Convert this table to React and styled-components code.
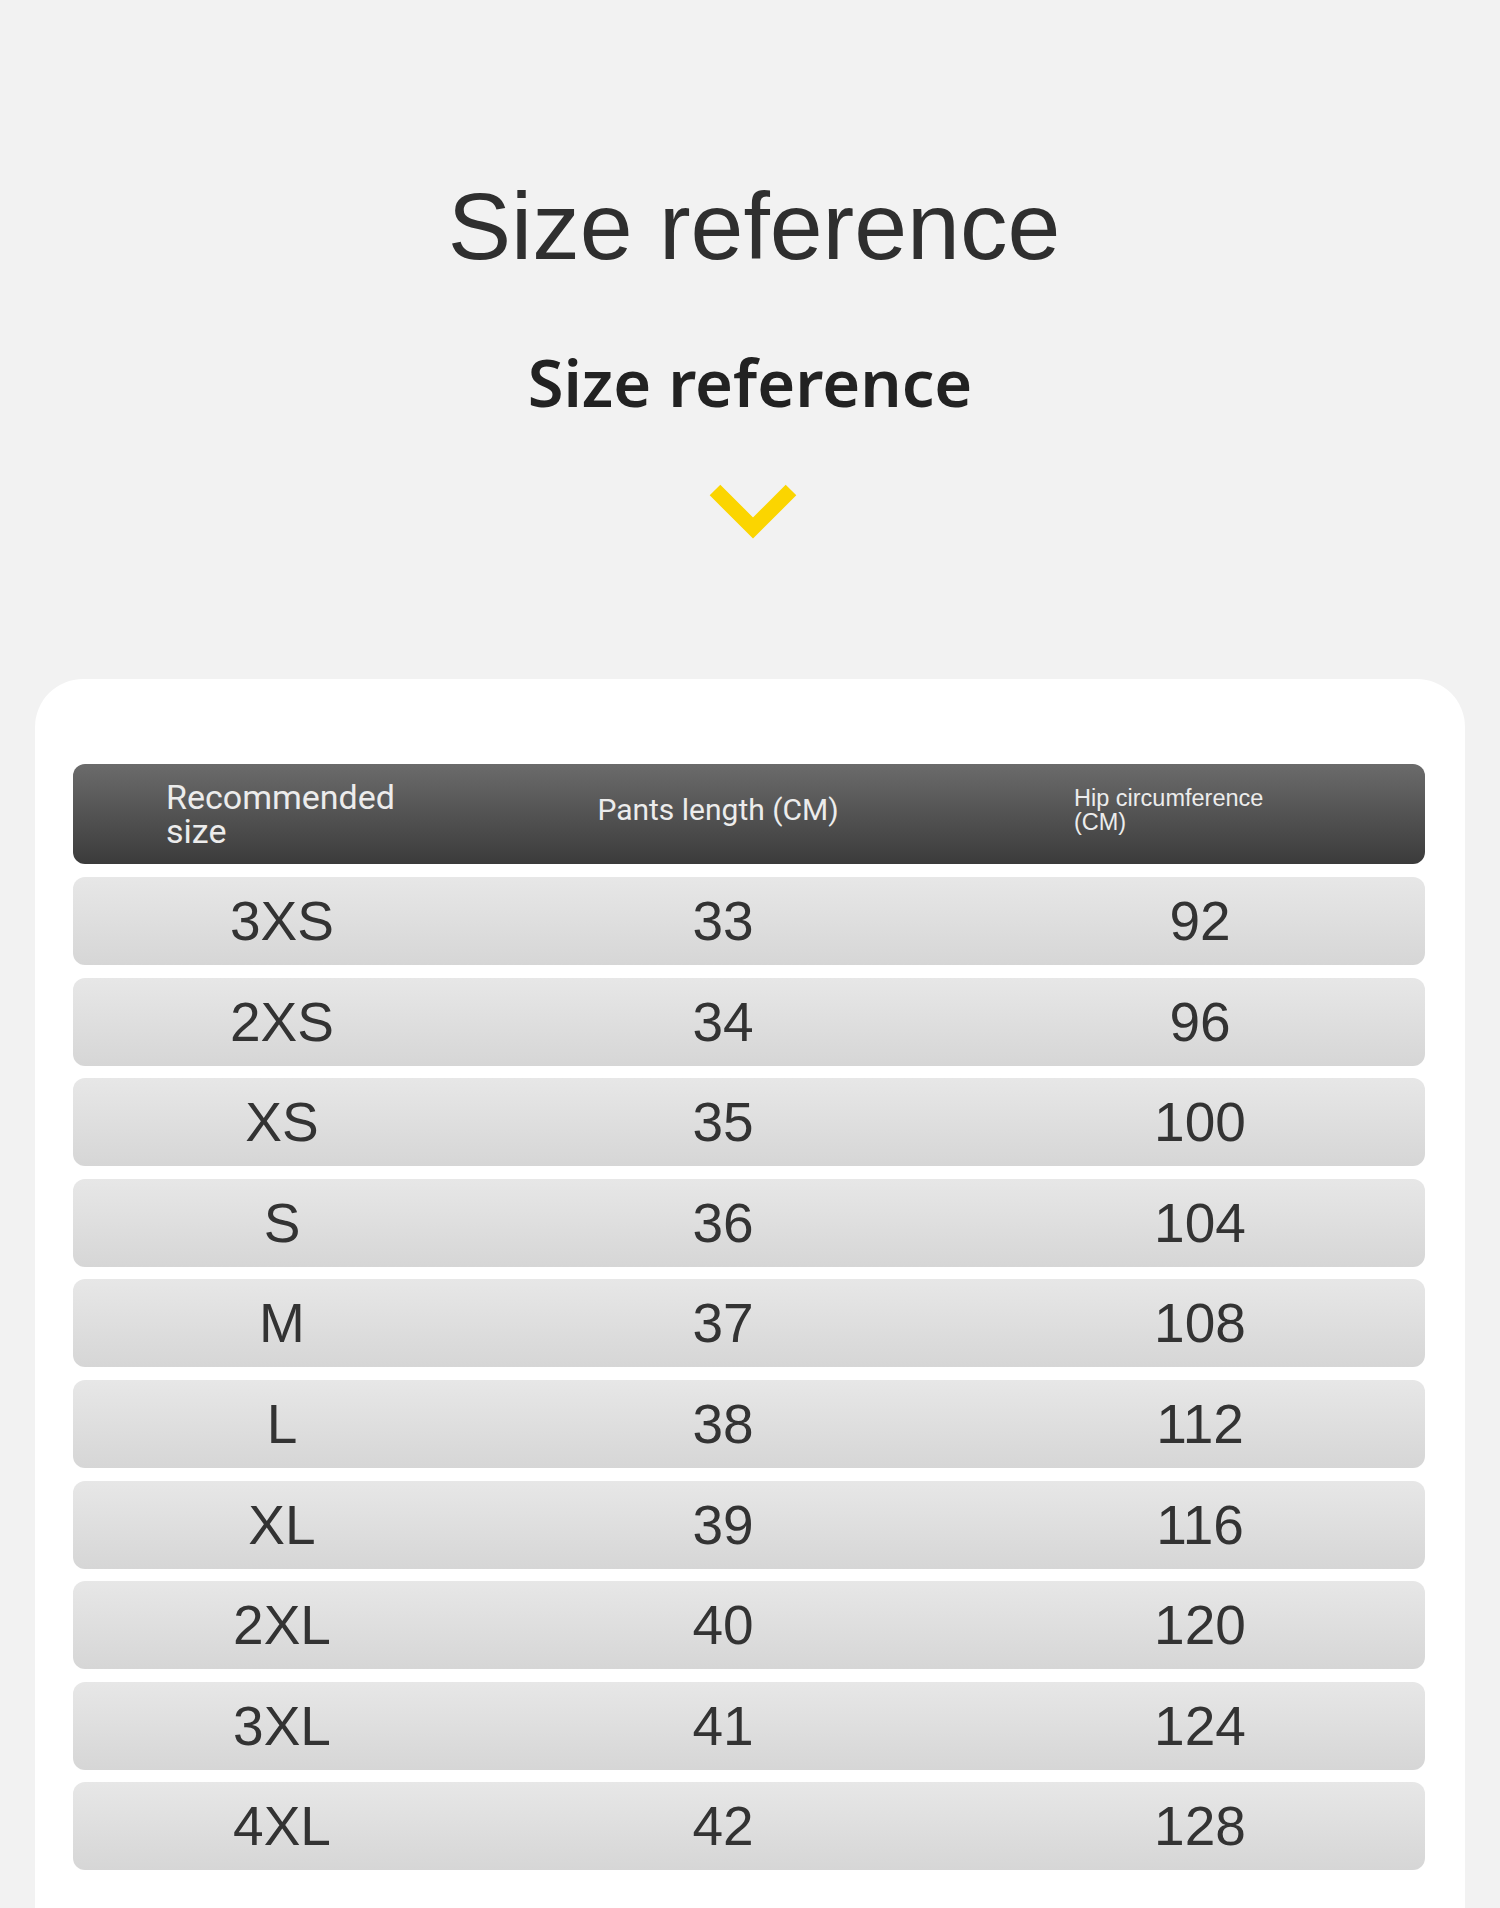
import React from "react";
import styled, { createGlobalStyle } from "styled-components";

const sizes = [
  ["3XS", 33, 92],
  ["2XS", 34, 96],
  ["XS", 35, 100],
  ["S", 36, 104],
  ["M", 37, 108],
  ["L", 38, 112],
  ["XL", 39, 116],
  ["2XL", 40, 120],
  ["3XL", 41, 124],
  ["4XL", 42, 128],
];

const GlobalStyle = createGlobalStyle`
  html, body {
    margin: 0;
    padding: 0;
    background: #f2f2f2;
    overflow: hidden;
  }
  body {
    font-family: "Liberation Sans", Arial, sans-serif;
  }
`;

export default function App() {
  return (
    <Page>
      <GlobalStyle />
      <Title>Size reference</Title>
      <Subtitle>Size reference</Subtitle>
      <Chevron viewBox="0 0 96 60" width="96" height="60">
        <polyline points="10,10 48,48 86,10" fill="none" stroke="#fbd500" strokeWidth="15" strokeLinejoin="miter" />
      </Chevron>
      <Card>
        <HeaderRow>
          <HeadCell $first>Recommended size</HeadCell>
          <HeadCell $center>Pants length (CM)</HeadCell>
          <HeadCell $small>Hip circumference (CM)</HeadCell>
        </HeaderRow>
        <Rows>
          {sizes.map(([size, len, hip]) => (
            <Row key={size}>
              <Cell>{size}</Cell>
              <Cell>{len}</Cell>
              <Cell $last>{hip}</Cell>
            </Row>
          ))}
        </Rows>
      </Card>
    </Page>
  );
}

const Page = styled.div`
  width: 1500px;
  height: 1908px;
  display: flex;
  flex-direction: column;
  align-items: center;
  padding-top: 179px;
  box-sizing: border-box;
`;

const Title = styled.h1`
  margin: 0 0 0 8px;
  font-family: "Liberation Sans", Arial, sans-serif;
  font-weight: 400;
  font-size: 95px;
  line-height: 1;
  color: #2f2f2f;
`;

const Subtitle = styled.h2`
  margin: 75px 0 0;
  font-family: "Noto Sans", sans-serif;
  font-weight: 600;
  font-size: 65px;
  line-height: 66px;
  color: #222;
`;

const Chevron = styled.svg`
  display: block;
  margin: 65px 0 0 6px;
`;

const Card = styled.div`
  margin-top: 139px;
  width: 1430px;
  flex: 1;
  box-sizing: border-box;
  background: #fff;
  border-radius: 48px 48px 0 0;
  padding: 85px 40px 0 38px;
`;

const Grid = styled.div`
  display: grid;
  grid-template-columns: 418px 464px 1fr;
  align-items: center;
`;

const HeaderRow = styled(Grid)`
  height: 100px;
  padding-bottom: 8px;
  box-sizing: border-box;
  border-radius: 12px;
  background: linear-gradient(to bottom, #6b6b6b, #3b3b3b);
  color: #ececec;
`;

const HeadCell = styled.div`
  font-family: ${(p) => (p.$small ? '"Liberation Sans", Arial' : '"Roboto", "Liberation Sans"')}, sans-serif;
  font-size: ${(p) => (p.$small ? "23.5px" : p.$center ? "30px" : "34px")};
  line-height: ${(p) => (p.$small ? "24px" : "34px")};
  text-align: ${(p) => (p.$center ? "center" : "left")};
  padding-left: ${(p) => (p.$first ? "93px" : p.$small ? "119px" : "0")};
  padding-right: ${(p) => (p.$center ? "10px" : "0")};
  margin-top: ${(p) => (p.$first ? "8px" : "0")};
  max-width: ${(p) => (p.$first ? "250px" : p.$small ? "210px" : "none")};
`;

const Rows = styled.div`
  display: flex;
  flex-direction: column;
  gap: 12.6px;
  margin-top: 13px;
`;

const Row = styled(Grid)`
  height: 88px;
  border-radius: 12px;
  background: linear-gradient(to bottom, #e7e7e7, #d6d6d6);
`;

const Cell = styled.div`
  text-align: center;
  font-size: 55px;
  color: #333;
  padding-left: ${(p) => (p.$last ? "20px" : "0")};
`;
